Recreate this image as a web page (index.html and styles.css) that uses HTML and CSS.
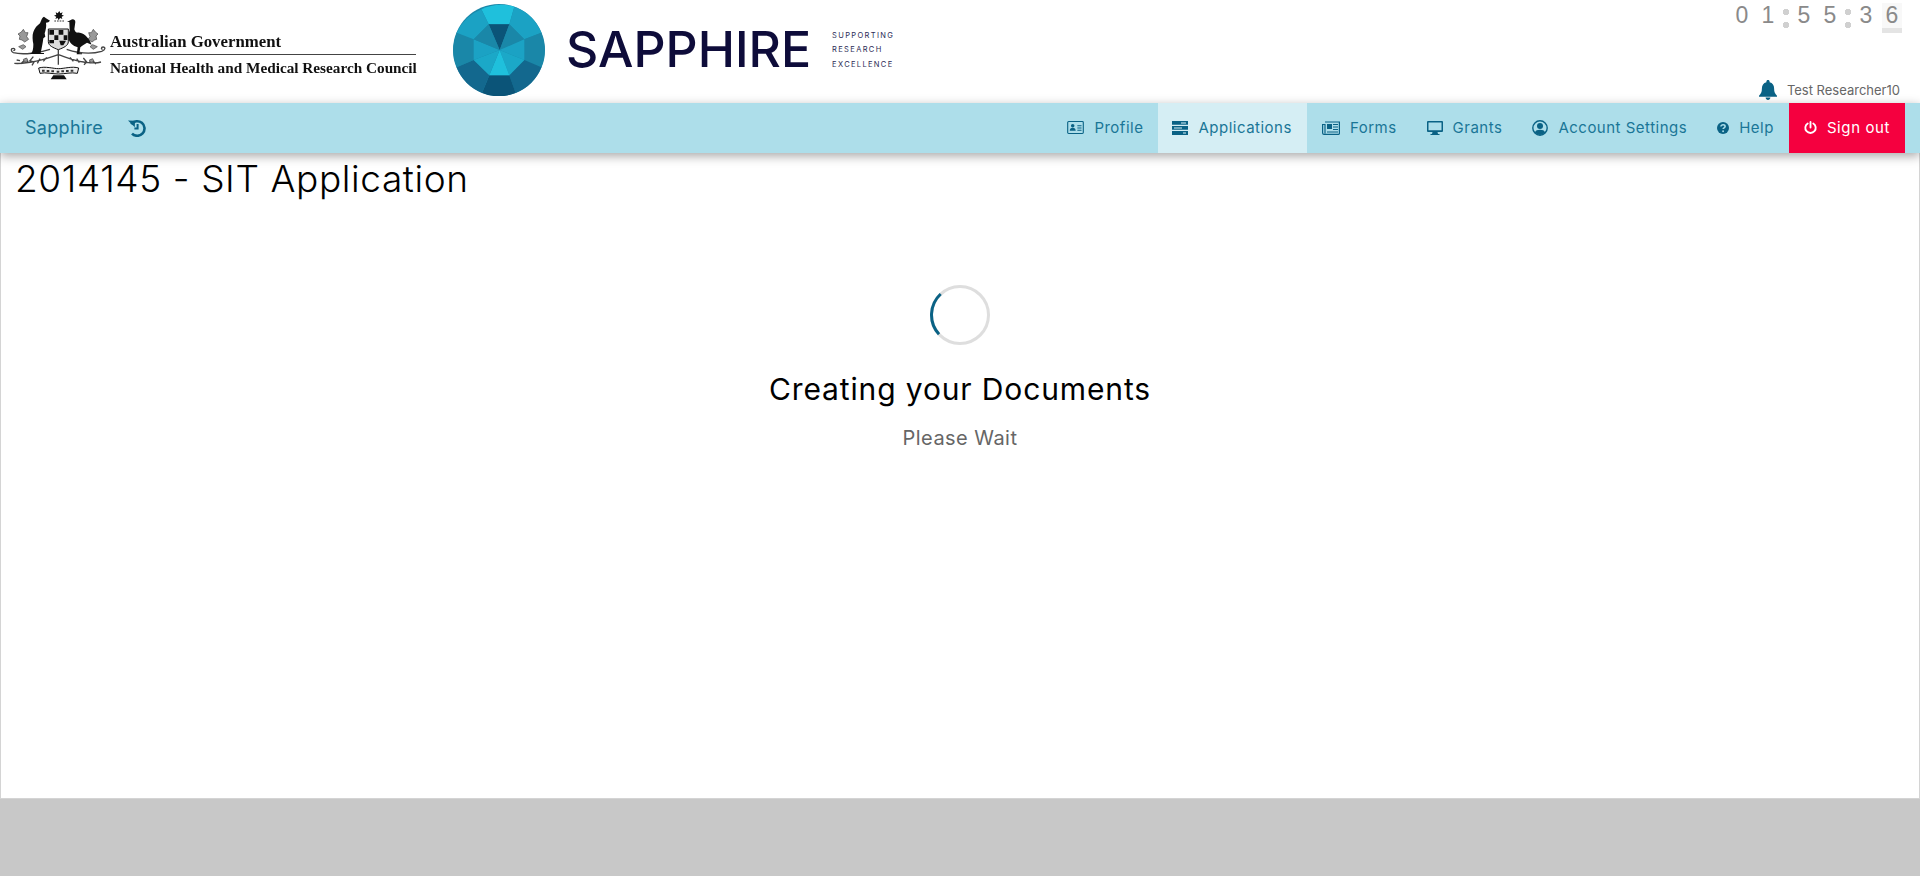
FILE: index.html
```html
<!DOCTYPE html>
<html lang="en">
<head>
<meta charset="utf-8">
<title>Sapphire</title>
<link rel="stylesheet" href="styles.css">
</head>
<body>
<header class="masthead">
  <div class="gov-logo">
    <svg class="arms" viewBox="0 0 360 270" aria-hidden="true">
      <path class="ink" d="M178 33l3 7 7-3-3 7 7 3-7 3 2 7-7-3-4 7-3-7-7 3 3-7-7-3 7-3-2-7 6 3z"/>
      <path class="ink-line" d="M163 63h30"/>
      <path class="thin" d="M175 150v44M175 164c-24 8-50 18-80 22-16 2-34 6-52 4M175 164c24 8 46 18 76 22 16 2 34 6 52 0M100 170l-10 12 12 4-6 10M74 180l-12 12M250 174l10 12-8 8M278 182l10 10M60 182l-10-2M120 176l-8 14M140 172l-10 12M210 172l10 12M230 176l8 12M84 186l-8-10M268 188l8-10"/>
      <path class="thin" d="M150 148c-30 10-80 18-110 10-8-4-8-13 0-13 6 0 6 8 0 6M200 148c30 10 70 16 105 6 12-4 12-13 4-13-6 0-6 8-1 6"/>
      <path class="leaf" d="M64 96l6-8 6 10 8 0-4 12 6 8-12 8-8-6-8-2 2-10-6-6zM286 96l-6-8-6 10-8 0 4 12-6 8 12 8 8-6 6-2-2-10 6-6zM56 140l14-6 8 6-10 8zM292 140l-14-6-8 6 10 8zM70 178l10-4 4 8-10 4zM268 180l10-4 4 8-10 4z"/>
      <path class="ink" d="M132 50l6 5 12 7-5 5-7 1c2 12-1 22-4 32l2 10-6 5c-2 16-5 30-8 44h10v3H88c10-2 12-14 12-30-2-10-4-26 0-36 4-12 12-20 20-26l5-12c1-3 3-6 7-8z"/>
      <path class="ink" d="M212 60c6-4 14-2 14 6l-3 22c2 6 3 8 8 10 14-2 32 8 44 36l-14-6-12 8-8 6-3 18h8v3h-16l3-21-10-4c-12-8-20-18-18-34l4-14-1-24-7 0z"/>
      <path class="shield" d="M145 87h60v38c0 12-14 18-30 24-16-6-30-12-30-24z"/>
      <path class="ink" d="M148 90h14v14h-14zM176 90h14v14h-14zM163 106h12v14h-12zM191 106h11v14h-11zM148 120h14v10h-14zM178 122h20l-8 14h-8z"/>
      <path class="shield-line" d="M116 204c20-6 44 2 60 2s40-8 60-2l-4 16c-18-4-38 2-56 2s-40-6-56-2z"/>
      <path class="ink" d="M160 226h32l8 12h-48z"/>
      <path class="dots" d="M126 212h8M140 213h8M154 214h8M170 215h8M184 214h8M198 213h8M212 212h8"/>
    </svg>
    <div class="gov-text">
      <span class="gov-line gov-top">Australian Government</span>
      <span class="gov-line gov-bottom">National Health and Medical Research Council</span>
    </div>
  </div>
  <div class="sapphire-logo">
    <svg class="gem" viewBox="38 12 276 276" aria-hidden="true">
      <circle cx="176" cy="150" r="138" fill="#1a87a8"/>
      <path fill="#1fc0dc" d="M123 28A138 138 0 0 1 222 20L207 73H145Z"/>
      <path fill="#1ba2c4" d="M222 20A138 138 0 0 1 303 98L252 118 207 73Z"/>
      <path fill="#1a87a8" d="M303 98A138 138 0 0 1 303 202L252 180V118Z"/>
      <path fill="#13688e" d="M303 202A138 138 0 0 1 226 279L207 226 252 180Z"/>
      <path fill="#0b5478" d="M226 279A138 138 0 0 1 125 279L147 226H207Z"/>
      <path fill="#13688e" d="M125 279A138 138 0 0 1 49 202L100 180 147 226Z"/>
      <path fill="#1a87a8" d="M49 202A138 138 0 0 1 49 98L100 118V180Z"/>
      <path fill="#1ba2c4" d="M49 98A138 138 0 0 1 123 28L145 73 100 118Z"/>
      <path fill="#0b5478" d="M145 73H207L178 150Z"/>
      <path fill="#1a87a8" d="M207 73 252 118 178 150Z"/>
      <path fill="#1ba2c4" d="M252 118V180L178 150Z"/>
      <path fill="#1ba8c8" d="M252 180 207 226 178 150Z"/>
      <path fill="#1fc0dc" d="M207 226H147L178 150Z"/>
      <path fill="#1ba8c8" d="M147 226 100 180 178 150Z"/>
      <path fill="#1ba2c4" d="M100 180V118L178 150Z"/>
      <path fill="#1a87a8" d="M100 118 145 73 178 150Z"/>
    </svg>
    <span class="wordmark">SAPPHIRE</span>
    <span class="tagline"><span>SUPPORTING</span><span>RESEARCH</span><span>EXCELLENCE</span></span>
  </div>
  <div class="session">
    <div class="timer">
      <span class="digit">0</span><span class="digit">1</span><span class="sep"></span><span class="digit">5</span><span class="digit">5</span><span class="sep"></span><span class="digit">3</span><span class="digit digit-live">6</span>
    </div>
    <div class="user">
      <svg class="bell" viewBox="0 0 18 20" aria-hidden="true"><path d="M9 0c1 0 1.600.6 1.600 1.600v.7c3 .7 4.500 3.200 4.500 6.200 0 3.800 1 5.200 2.900 7.200v1H0v-1c1.900-2 2.900-3.400 2.900-7.200 0-3 1.500-5.500 4.500-6.200v-.7C7.400.6 8 0 9 0zM6.600 17.500h4.800C11.300 19 10.300 20 9 20s-2.300-1-2.400-2.500z"/></svg>
      <span>Test Researcher10</span>
    </div>
  </div>
</header>

<nav class="navbar">
  <div class="nav-left">
    <a class="brand">Sapphire</a>
    <svg class="history" viewBox="0 0 18 18" aria-hidden="true"><path d="M3.300 5.200A7.300 7.300 0 1 1 4 14.600" fill="none" stroke-width="2.600"/><path d="M0 1.500l7 .2-.2 6.500z" stroke="none"/><path d="M9.600 5v4.400H6.400" fill="none" stroke-width="2"/></svg>
  </div>
  <div class="nav-right">
    <a class="nav-item">
      <svg class="ico ico-card" viewBox="0 0 18 14" aria-hidden="true"><rect x=".6" y=".6" width="16.800" height="12.800" rx="1" fill="none" stroke-width="1.200"/><circle cx="6" cy="5" r="1.900" stroke="none"/><path d="M2.800 10.500c0-2.200 1.300-3.300 3.200-3.300s3.200 1.100 3.200 3.300z" stroke="none"/><path d="M11 5h4.500M11 7.500h4.500M11 10h4.500" stroke-width="1.100"/></svg>
      <span>Profile</span>
    </a>
    <a class="nav-item is-active">
      <svg class="ico ico-stack" viewBox="0 0 16 14" aria-hidden="true"><path stroke="none" d="M0 0h16v3.800H0zM0 5h16v3.800H0zM0 10h16v4H0z"/><path class="cut" d="M9 2h5M2 7h8M11 12h3"/></svg>
      <span>Applications</span>
    </a>
    <a class="nav-item">
      <svg class="ico" viewBox="0 0 18 14" aria-hidden="true"><path fill="none" stroke-width="1.200" d="M3 1h14.400v11.600a.8.800 0 0 1-.8.800H2A1.400 1.400 0 0 1 .6 12V3.500H3v9"/><path stroke="none" d="M5 3h5v5H5z"/><path stroke-width="1" d="M11 3.500h5M11 6h5M11 8.500h5M5 11h11"/></svg>
      <span>Forms</span>
    </a>
    <a class="nav-item">
      <svg class="ico ico-stack" viewBox="0 0 16 14" aria-hidden="true"><path stroke="none" fill-rule="evenodd" d="M1 0h14a1 1 0 0 1 1 1v9a1 1 0 0 1-1 1h-4.500l.5 2h1.500v1h-9v-1H5l.5-2H1a1 1 0 0 1-1-1V1a1 1 0 0 1 1-1zm.5 1.500v7.700h13V1.500z"/></svg>
      <span>Grants</span>
    </a>
    <a class="nav-item">
      <svg class="ico ico-round" viewBox="0 0 16 16" aria-hidden="true"><circle cx="8" cy="8" r="7.200" fill="none" stroke-width="1.400"/><circle cx="8" cy="6" r="3" stroke="none"/><path stroke="none" d="M2.800 12.600C3.500 10.500 5.500 9.800 8 9.800s4.500.7 5.200 2.800A7 7 0 0 1 8 15a7 7 0 0 1-5.200-2.400z"/></svg>
      <span>Account Settings</span>
    </a>
    <a class="nav-item">
      <svg class="ico ico-help" viewBox="0 0 13 13" aria-hidden="true"><circle cx="6.500" cy="6.500" r="6.500" stroke="none"/><path class="cut-q" d="M4.300 5c0-1.300 1-2 2.300-2 1.200 0 2.200.7 2.200 1.800 0 1.500-2.200 1.500-2.200 2.900"/><circle class="dot-q" cx="6.600" cy="10" r="1"/></svg>
      <span>Help</span>
    </a>
    <a class="nav-item signout">
      <svg class="ico ico-power" viewBox="0 0 14 14" aria-hidden="true"><path d="M4 2.600a5.600 5.600 0 1 0 6 0" fill="none" stroke-width="2" stroke-linecap="round"/><path d="M7 1v6" fill="none" stroke-width="2" stroke-linecap="round"/></svg>
      <span>Sign out</span>
    </a>
  </div>
</nav>

<main class="content">
  <h1 class="title">2014145 - SIT Application</h1>
  <div class="loader">
    <svg class="spinner" viewBox="0 0 60 60" aria-hidden="true">
      <circle class="spin-track" cx="30" cy="30" r="28.500"/>
      <path class="spin-arc" d="M10.700 9A28.500 28.500 0 0 0 9 49.200"/>
    </svg>
    <h2 class="loader-title">Creating your Documents</h2>
    <p class="loader-sub">Please Wait</p>
  </div>
</main>
<div class="backdrop"></div>
</body>
</html>
```

FILE: styles.css
```css
* { box-sizing: border-box; }
html, body { height: 100%; }
body {
  margin: 0;
  display: flex;
  flex-direction: column;
  height: 876px;
  overflow: hidden;
  background: #fff;
  font-family: Inter, "Open Sans", sans-serif;
  color: #000;
}

.masthead {
  height: 103px;
  flex: none;
  display: flex;
  padding: 0 17px 0 0;
  background: #fff;
}

.gov-logo {
  width: 453px;
  flex: none;
  display: flex;
  align-items: flex-start;
}
.arms { width: 120px; height: 90px; flex: none; filter: blur(.5px); }
.ink { fill: #111; }
.ink-line { stroke: #333; stroke-width: 3; stroke-dasharray: 5 3; fill: none; }
.shield { fill: #ddd; stroke: #111; stroke-width: 3; }
.shield-line { fill: #eee; stroke: #111; stroke-width: 3; }
.thin { fill: none; stroke: #444; stroke-width: 4; }
.leaf { fill: #999; stroke: #444; stroke-width: 2; }
.dots { fill: none; stroke: #333; stroke-width: 6; }

.gov-text {
  margin-top: 30px;
  margin-left: -10px;
  width: 306px;
  display: flex;
  flex-direction: column;
  font-family: "Liberation Serif", serif;
  font-weight: 700;
  color: #111;
  filter: blur(.35px);
}
.gov-line { display: block; white-space: nowrap; }
.gov-top {
  font-size: 16.800px;
  line-height: 24px;
  border-bottom: 1px solid #444;
}
.gov-bottom { font-size: 15.250px; line-height: 26px; }

.sapphire-logo {
  flex: none;
  display: flex;
  align-items: flex-start;
}
.gem { width: 92px; height: 92px; margin-top: 4px; flex: none; }
.wordmark {
  margin: 21px 0 0 21px;
  font-size: 50px;
  line-height: 56px;
  font-weight: 500;
  color: #0e0c3a;
  filter: blur(.3px);
}
.tagline {
  margin: 29px 0 0 21px;
  display: flex;
  flex-direction: column;
  font-size: 7.500px;
  line-height: 14.400px;
  letter-spacing: 1.350px;
  color: #2b2a55;
}

.session {
  margin-left: auto;
  display: flex;
  flex-direction: column;
  justify-content: space-between;
  align-items: flex-end;
}
.timer {
  display: flex;
  padding-top: 3px;
  font-family: "Liberation Sans", Arial, sans-serif;
  font-size: 23px;
  line-height: 25px;
  color: #8a8a8a;
}
.digit { width: 26px; height: 30px; text-align: center; }
.digit-live {
  width: 20px;
  margin: 0 1px 0 3px;
  background: #f8f8f8;
  border-bottom: 5px solid #e4e4e4;
}
.sep {
  width: 10px;
  margin: 6px 0 0;
  height: 19px;
  background:
    radial-gradient(circle at 5px 3px, #d0d0d0 3px, transparent 3.500px),
    radial-gradient(circle at 5px 16px, #d0d0d0 3px, transparent 3.500px);
}
.user {
  display: flex;
  align-items: center;
  height: 24px;
  gap: 10px;
  margin-right: 3px;
  margin-bottom: 1px;
  font-size: 13px;
  color: #666;
}
.bell { width: 18px; height: 20px; fill: #0a6285; }

.navbar {
  position: relative;
  z-index: 2;
  height: 50px;
  flex: none;
  display: flex;
  justify-content: space-between;
  padding: 0 15px 0 25px;
  background: #addeea;
  box-shadow: 0 3px 10px rgba(0, 0, 0, .35);
  color: #1a7697;
}
.nav-left { display: flex; align-items: center; gap: 25px; padding-bottom: 1px; }
.brand { font-size: 18px; font-weight: 400; letter-spacing: .3px; }
.history { width: 18px; height: 18px; stroke: #0a6285; fill: #0a6285; }
.nav-right { display: flex; }
.nav-item {
  display: flex;
  align-items: center;
  gap: 10px;
  padding: 0 15px 1px;
  font-size: 15px;
  letter-spacing: .5px;
  white-space: nowrap;
}
.ico { width: 18px; height: 14px; fill: #0a6285; stroke: #0a6285; flex: none; }
.ico-card { width: 17px; height: 13px; }
.ico-stack { width: 16px; height: 14px; }
.ico-round { width: 16px; height: 16px; }
.ico-help { width: 12px; height: 12px; }
.ico-power { width: 13px; height: 13px; fill: none; stroke: #fff; }
.cut { stroke: #addeea; stroke-width: 1; }
.is-active { background: #d5eef4; padding-left: 14px; }
.is-active .cut { stroke: #d5eef4; }
.cut-q { fill: none; stroke: #addeea; stroke-width: 1.700; }
.dot-q { fill: #addeea; stroke: none; }
.signout { background: #f5003f; color: #fff; font-weight: 400; letter-spacing: .6px; }

.content {
  height: 646px;
  flex: none;
  padding: 0 0 0 14px;
  border: 1px solid #d4d4d4;
  border-top: 0;
  background: #fff;
}
.title {
  margin: 0;
  padding-top: 4px;
  font-size: 37px;
  line-height: 44px;
  font-weight: 300;
  letter-spacing: .6px;
}
.loader {
  margin: 84px 0 0 -14px;
  display: flex;
  flex-direction: column;
  align-items: center;
}
.spinner { width: 60px; height: 60px; display: block; }
.spin-track { fill: none; stroke: #dedede; stroke-width: 3; }
.spin-arc { fill: none; stroke: #0a6285; stroke-width: 3; }
.loader-title {
  margin: 26px 0 0;
  font-size: 30px;
  line-height: 36px;
  font-weight: 400;
  letter-spacing: .87px;
}
.loader-sub {
  margin: 18px 0 0;
  font-size: 20px;
  line-height: 26px;
  letter-spacing: .45px;
  color: #666;
}
.backdrop { flex: 1; background: #c8c8c8; }
```
